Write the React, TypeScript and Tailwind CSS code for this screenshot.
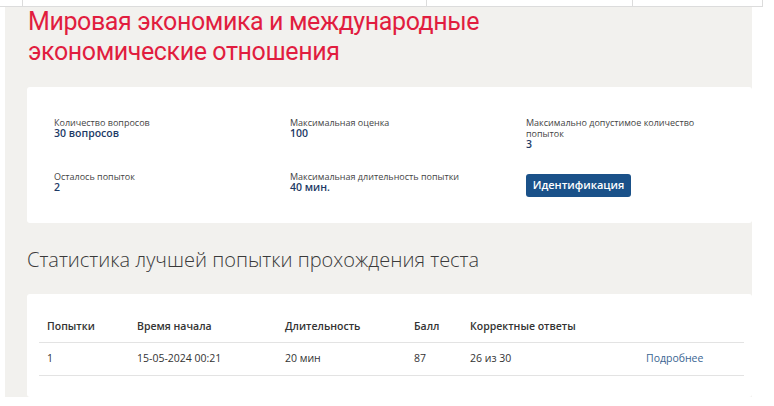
export default function App() {
  const stats = [
    { label: 'Количество вопросов', value: '30 вопросов' },
    { label: 'Максимальная оценка', value: '100' },
    { label: 'Максимально допустимое количество попыток', value: '3' },
    { label: 'Осталось попыток', value: '2' },
    { label: 'Максимальная длительность попытки', value: '40 мин.' },
  ];
  const cols = ['w-[90px]', 'w-[148px]', 'w-[129px]', 'w-[56px]', 'w-[176px]', 'w-[106px]'];
  const head = ['Попытки', 'Время начала', 'Длительность', 'Балл', 'Корректные ответы', ''];

  return (
    <div className="w-[774px] h-[406px] bg-white overflow-hidden font-['Open_Sans',sans-serif] text-[#333]">
      {/* cut-off table above */}
      <div className="flex h-[7px] w-[763px] border-b border-r border-[#dcdcdc]">
        <div className="w-[23px] border-r border-[#dcdcdc]" />
        <div className="w-[404px] border-r border-[#dcdcdc]" />
        <div className="w-[206px] border-r border-[#dcdcdc]" />
        <div className="flex-1" />
      </div>

      <div className="ml-[5px] w-[747px] h-[390px] bg-[#f2f1ee] pl-[22px]">
        <h1 className="pl-[1px] text-[25px] leading-[30px] text-[#e11d3f] font-['Roboto',sans-serif] tracking-[-0.4px]">
          Мировая экономика и международные
          <br />
          экономические отношения
        </h1>

        <div className="mt-[20px] w-[725px] h-[136px] bg-white rounded-[3px] pl-[27px] pt-[30px]">
          <div className="grid grid-cols-[236px_236px_200px] grid-rows-[54px_auto]">
            {stats.slice(0, 3).map(s => (
              <div key={s.label}>
                <div className="text-[9px] leading-[11px] text-[#444] w-[180px]">{s.label}</div>
                <div className="text-[10.5px] leading-[11px] font-semibold text-[#1d3a66]">{s.value}</div>
              </div>
            ))}
            {stats.slice(3).map(s => (
              <div key={s.label}>
                <div className="text-[9px] leading-[11px] text-[#444]">{s.label}</div>
                <div className="text-[10.5px] leading-[11px] font-semibold text-[#1d3a66]">{s.value}</div>
              </div>
            ))}
            <div>
              <button className="w-[105px] h-[23px] bg-[#1a5189] rounded-[3px] text-white text-[11px] font-semibold">
                Идентификация
              </button>
            </div>
          </div>
        </div>

        <h2 className="mt-[22px] text-[20px] leading-[30px] font-light text-[#3a3a3a]">
          Статистика лучшей попытки прохождения теста
        </h2>

        <div className="mt-[19px] w-[725px] h-[103px] bg-white rounded-[3px] pl-[12px] pt-[18px]">
          <div className="w-[705px] text-[10.5px]">
            <div className="flex h-[31px] items-center border-b border-[#e3e3e3] font-semibold text-[#333]">
              {head.map((h, i) => (
                <div key={i} className={`${cols[i]} px-2`}>{h}</div>
              ))}
            </div>
            <div className="flex h-[33px] items-center border-b border-[#e3e3e3] text-[#333]">
              <div className={`${cols[0]} px-2`}>1</div>
              <div className={`${cols[1]} px-2`}>15-05-2024 00:21</div>
              <div className={`${cols[2]} px-2`}>20 мин</div>
              <div className={`${cols[3]} px-2`}>87</div>
              <div className={`${cols[4]} px-2`}>26 из 30</div>
              <div className={`${cols[5]} px-2 text-[#3b6592]`}>Подробнее</div>
            </div>
          </div>
        </div>
      </div>
    </div>
  );
}
